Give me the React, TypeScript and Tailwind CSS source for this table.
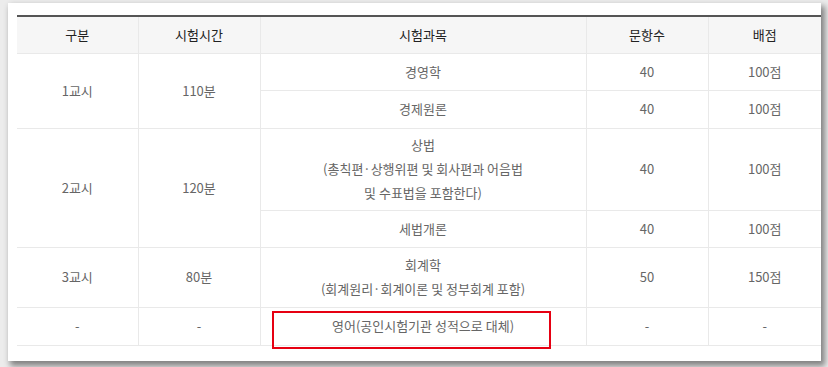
import React from 'react';

type Row = {
  period?: { label: string; time: string; span: number };
  subject: React.ReactNode;
  count: string;
  score: string;
  h: string;
};

const rows: Row[] = [
  { period: { label: '1교시', time: '110분', span: 2 }, subject: '경영학', count: '40', score: '100점', h: 'h-[37px]' },
  { subject: '경제원론', count: '40', score: '100점', h: 'h-[38px]' },
  {
    period: { label: '2교시', time: '120분', span: 2 },
    subject: (
      <>
        상법
        <br />
        (총칙편·상행위편 및 회사편과 어음법
        <br />및 수표법을 포함한다)
      </>
    ),
    count: '40',
    score: '100점',
    h: 'h-[82px]',
  },
  { subject: '세법개론', count: '40', score: '100점', h: 'h-[37px]' },
  {
    period: { label: '3교시', time: '80분', span: 1 },
    subject: (
      <>
        회계학
        <br />
        (회계원리·회계이론 및 정부회계 포함)
      </>
    ),
    count: '50',
    score: '150점',
    h: 'h-[60px]',
  },
  {
    period: { label: '-', time: '-', span: 1 },
    subject: '영어(공인시험기관 성적으로 대체)',
    count: '-',
    score: '-',
    h: 'h-[38px]',
  },
];

const cell = 'border border-[#e9e9e9] text-center align-middle';

export default function App() {
  return (
    <div className="h-[367px] w-[828px] overflow-hidden bg-[#ececec] pt-[3px] pl-[8px] font-['Noto_Sans_CJK_KR','Noto_Sans',sans-serif]">
      <div className="h-[358px] w-[813px] bg-white pt-[12px] pl-[9px] shadow-[3px_4px_6px_1px_rgba(0,0,0,0.45)]">
        <div className="relative w-[804px]">
          <table className="w-full table-fixed border-collapse text-[13px] leading-[24px] text-[#666]">
            <colgroup>
              <col className="w-[121px]" />
              <col className="w-[122px]" />
              <col className="w-[326px]" />
              <col className="w-[122px]" />
              <col />
            </colgroup>
            <thead>
              <tr className="h-[37px] border-t-2 border-t-[#555] bg-[#f6f6f6] text-[#222]">
                <th className={`${cell} border-l-0 border-t-0 font-normal`}>구분</th>
                <th className={`${cell} border-t-0 font-normal`}>시험시간</th>
                <th className={`${cell} border-t-0 font-normal`}>시험과목</th>
                <th className={`${cell} border-t-0 font-normal`}>문항수</th>
                <th className={`${cell} border-r-0 border-t-0 font-normal`}>배점</th>
              </tr>
            </thead>
            <tbody>
              {rows.map((r, i) => (
                <tr key={i} className={r.h}>
                  {r.period && (
                    <>
                      <td rowSpan={r.period.span} className={`${cell} border-l-0`}>
                        {r.period.label}
                      </td>
                      <td rowSpan={r.period.span} className={cell}>
                        {r.period.time}
                      </td>
                    </>
                  )}
                  <td className={cell}>{r.subject}</td>
                  <td className={cell}>{r.count}</td>
                  <td className={`${cell} border-r-0`}>{r.score}</td>
                </tr>
              ))}
            </tbody>
          </table>
          {/* red highlight over the 영어 row */}
          <div className="pointer-events-none absolute left-[255px] top-[296px] h-[38px] w-[279px] border-2 border-[#e60012]" />
        </div>
      </div>
    </div>
  );
}
